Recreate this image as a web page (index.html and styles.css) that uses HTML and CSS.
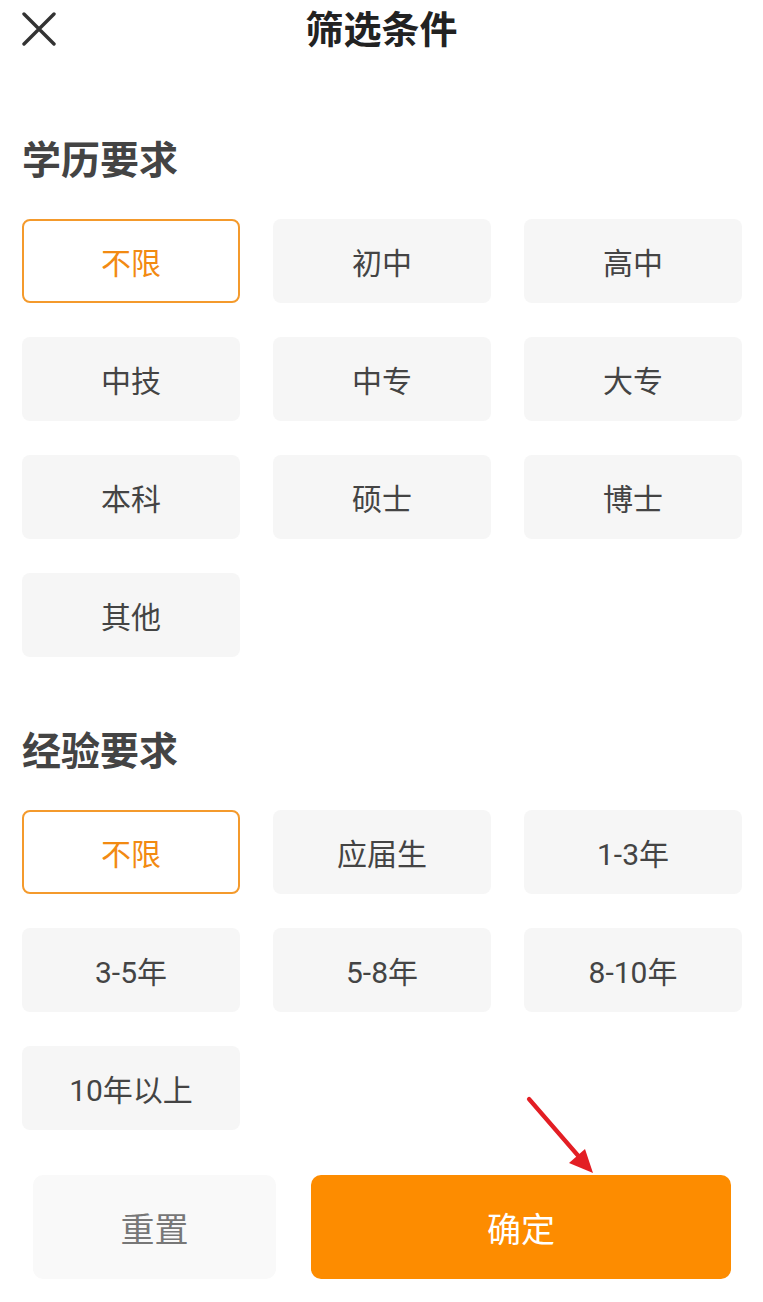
FILE: index.html
```html
<!DOCTYPE html>
<html lang="zh-CN">
<head>
    <meta charset="utf-8">
    <title>筛选条件</title>
    <link rel="stylesheet" href="styles.css">
</head>
<body>
    <div class="page">
        <div class="top-bar">
            <span class="close-btn">
                <svg width="34" height="34" viewBox="0 0 34 34">
                    <path d="M2 2 L32 32 M32 2 L2 32" stroke="#333" stroke-width="3.4" stroke-linecap="round" fill="none"/>
                </svg>
            </span>
            <h1 class="top-title">筛选条件</h1>
        </div>

        <div class="filter-group group-first">
            <h2 class="group-title">学历要求</h2>
            <div class="chips">
                <div class="chip active">不限</div>
                <div class="chip">初中</div>
                <div class="chip">高中</div>
                <div class="chip">中技</div>
                <div class="chip">中专</div>
                <div class="chip">大专</div>
                <div class="chip">本科</div>
                <div class="chip">硕士</div>
                <div class="chip">博士</div>
                <div class="chip">其他</div>
            </div>
        </div>

        <div class="filter-group group-second">
            <h2 class="group-title">经验要求</h2>
            <div class="chips">
                <div class="chip active">不限</div>
                <div class="chip">应届生</div>
                <div class="chip">1-3年</div>
                <div class="chip">3-5年</div>
                <div class="chip">5-8年</div>
                <div class="chip">8-10年</div>
                <div class="chip">10年以上</div>
            </div>
        </div>

        <div class="bottom-bar">
            <button class="btn btn-reset">重置</button>
            <button class="btn btn-ok">确定</button>
            <!-- hint arrow pointing at the confirm button -->
            <svg class="hint-arrow" width="80" height="90" viewBox="0 0 80 90">
                <line x1="6" y1="4" x2="58" y2="64" stroke="#e31e24" stroke-width="4.2" stroke-linecap="round"/>
                <polygon points="70,78 46,68 62,54" fill="#e31e24"/>
            </svg>
        </div>
    </div>
</body>
</html>
```

FILE: styles.css
```css
html,
body {
    margin: 0;
    padding: 0;
    background: #fff;
    font-family: Roboto, "Noto Sans CJK SC", sans-serif;
}

.page {
    width: 763px;
    position: relative;
}

.top-bar {
    height: 60px;
    position: relative;
    display: flex;
    align-items: center;
    justify-content: center;
}

.close-btn {
    position: absolute;
    left: 22px;
    top: 12px;
    width: 34px;
    height: 34px;
}

.close-btn svg {
    display: block;
}

.top-title {
    margin: 0;
    font-size: 38px;
    line-height: 60px;
    font-weight: bold;
    color: #222;
}

.filter-group {
    padding: 0 21px 0 22px;
}

.group-first {
    margin-top: 76px;
}

.group-second {
    margin-top: 70px;
}

.group-title {
    margin: 0 0 33px;
    font-size: 39px;
    line-height: 50px;
    font-weight: bold;
    color: #444;
}

.chips {
    display: grid;
    grid-template-columns: repeat(3, 218px);
    column-gap: 33px;
    row-gap: 34px;
}

.chip {
    height: 84px;
    box-sizing: border-box;
    border-radius: 8px;
    background: #f6f6f6;
    color: #444;
    font-size: 30px;
    display: flex;
    align-items: center;
    justify-content: center;
}

.chip.active {
    background: #fff;
    border: 2px solid #f49a2c;
    color: #f28a12;
}

.bottom-bar {
    margin-top: 45px;
    padding: 0 32px 0 33px;
    display: flex;
    gap: 35px;
    position: relative;
}

.btn {
    height: 104px;
    border: none;
    border-radius: 10px;
    font-family: "Noto Sans CJK SC", sans-serif;
    font-size: 34px;
    padding: 0;
}

.btn-reset {
    width: 243px;
    background: #f9f9f9;
    color: #777;
}

.btn-ok {
    width: 420px;
    background: #fd8c00;
    color: #fff;
}

.hint-arrow {
    position: absolute;
    left: 523px;
    top: -80px;
}
```
